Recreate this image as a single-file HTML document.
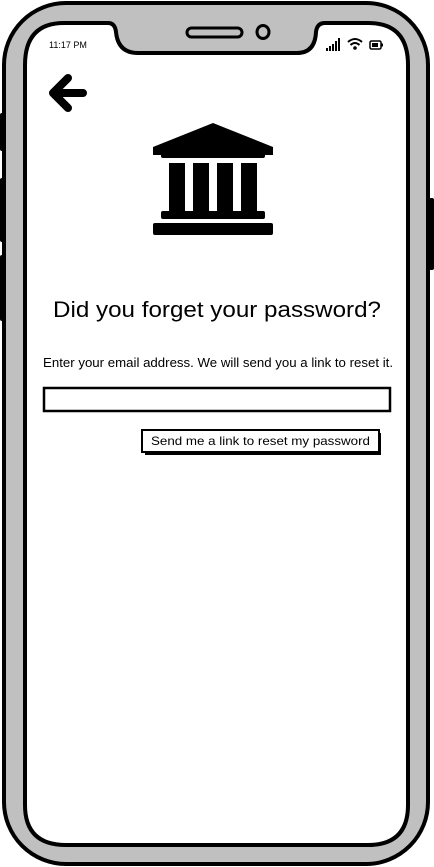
<!DOCTYPE html>
<html><head><meta charset="utf-8"><style>
html,body{margin:0;padding:0;background:#fff;width:434px;height:867px;overflow:hidden}
svg{display:block}
text{font-family:"Liberation Sans",sans-serif}
</style></head><body>
<svg width="434" height="867" viewBox="0 0 434 867" xmlns="http://www.w3.org/2000/svg">
<rect x="0" y="113" width="5" height="38" rx="2" fill="#000"/>
<rect x="0" y="178" width="5" height="64" rx="2" fill="#000"/>
<rect x="0" y="255" width="5" height="66" rx="2" fill="#000"/>
<rect x="429" y="198" width="5" height="72" rx="2" fill="#000"/>
<rect x="4" y="3" width="424" height="861" rx="62" fill="#c0c0c0" stroke="#000" stroke-width="4"/>
<path d="M64 23 H108 Q115 23 116 32 Q118 53 138 53 H297 Q315 53 316 32 Q317 23 325 23 H368 Q408 23 408 65 V805 Q408 845 368 845 H66 Q25 845 25 805 V65 Q25 23 64 23 Z" fill="#fff" stroke="#000" stroke-width="4"/>
<rect x="187" y="28" width="55" height="9" rx="4.5" fill="#c0c0c0" stroke="#000" stroke-width="3"/>
<ellipse cx="263" cy="32" rx="6" ry="6.5" fill="#c0c0c0" stroke="#000" stroke-width="3"/>
<text x="49" y="48" font-size="9" fill="#000">11:17 PM</text>
<rect x="326" y="48" width="2" height="3" fill="#000"/>
<rect x="329" y="46" width="2" height="5" fill="#000"/>
<rect x="332" y="44" width="2" height="7" fill="#000"/>
<rect x="335" y="41" width="2" height="10" fill="#000"/>
<rect x="338" y="38" width="2" height="13" fill="#000"/>
<path d="M348 42 Q355 36 362 42 M350.5 45 Q355 41 359.5 45" fill="none" stroke="#000" stroke-width="2"/>
<circle cx="355" cy="48" r="1.8" fill="#000"/>
<rect x="370" y="41" width="11" height="8" rx="1.5" fill="none" stroke="#000" stroke-width="1.5"/>
<rect x="372" y="43" width="6" height="4" fill="#000"/>
<rect x="381.5" y="43.5" width="1.5" height="3" fill="#000"/>
<path d="M83 93 H54 M68 78 L53 93 L68 108" fill="none" stroke="#000" stroke-width="8" stroke-linecap="round" stroke-linejoin="round"/>
<path d="M213 123 L273 147 V155 H153 V147 Z" fill="#000"/>
<rect x="161" y="153" width="104" height="5" rx="2" fill="#000"/>
<rect x="169" y="163" width="16" height="49" fill="#000"/>
<rect x="193" y="163" width="16" height="49" fill="#000"/>
<rect x="217" y="163" width="16" height="49" fill="#000"/>
<rect x="241" y="163" width="16" height="49" fill="#000"/>
<rect x="161" y="211" width="104" height="8" rx="2" fill="#000"/>
<rect x="153" y="223" width="120" height="12" rx="2" fill="#000"/>
<text x="53" y="317" font-size="22" textLength="328" lengthAdjust="spacingAndGlyphs" fill="#000">Did you forget your password?</text>
<text x="43" y="367" font-size="12.5" textLength="350" lengthAdjust="spacingAndGlyphs" fill="#000">Enter your email address. We will send you a link to reset it.</text>
<rect x="44" y="388" width="346" height="23" fill="#fff" stroke="#000" stroke-width="2.5"/>
<rect x="145" y="433" width="236" height="22" fill="#000"/>
<rect x="142" y="430" width="237" height="22" fill="#fff" stroke="#000" stroke-width="2"/>
<text x="151" y="445" font-size="12" textLength="219" lengthAdjust="spacingAndGlyphs" fill="#000">Send me a link to reset my password</text>
</svg>
</body></html>
